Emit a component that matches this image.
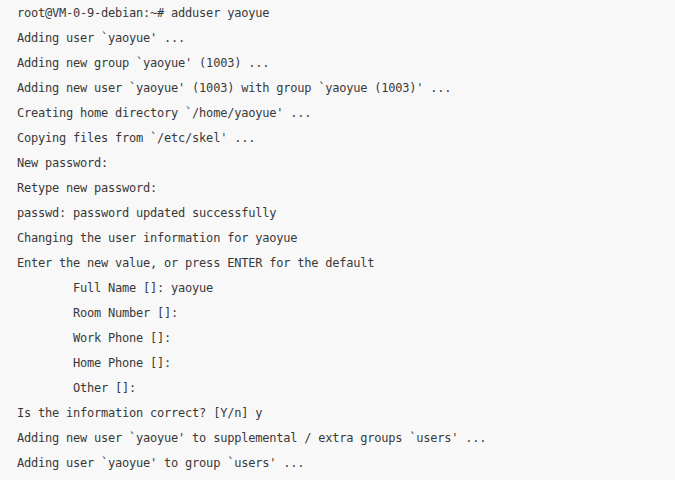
export default function App() {
  const lines = [
    ["", "root@VM-0-9-debian:~# adduser yaoyue"],
    ["", "Adding user `yaoyue' ..."],
    ["", "Adding new group `yaoyue' (1003) ..."],
    ["", "Adding new user `yaoyue' (1003) with group `yaoyue (1003)' ..."],
    ["", "Creating home directory `/home/yaoyue' ..."],
    ["", "Copying files from `/etc/skel' ..."],
    ["", "New password:"],
    ["", "Retype new password:"],
    ["", "passwd: password updated successfully"],
    ["", "Changing the user information for yaoyue"],
    ["", "Enter the new value, or press ENTER for the default"],
    ["i", "Full Name []: yaoyue"],
    ["i", "Room Number []:"],
    ["i", "Work Phone []:"],
    ["i", "Home Phone []:"],
    ["i", "Other []:"],
    ["", "Is the information correct? [Y/n] y"],
    ["", "Adding new user `yaoyue' to supplemental / extra groups `users' ..."],
    ["", "Adding user `yaoyue' to group `users' ..."],
  ];
  return (
    <div className="w-[675px] h-[480px] overflow-hidden bg-[#f8f8f8] text-[#383838] font-['DejaVu_Sans_Mono',monospace] text-[12px] leading-[25px] tracking-[-0.22px] pl-[17px] pt-[1px]">
      {lines.map(([k, t], i) => (
        <div key={i} className={k === "i" ? "whitespace-pre pl-[56px]" : "whitespace-pre"}>
          {t}
        </div>
      ))}
    </div>
  );
}
